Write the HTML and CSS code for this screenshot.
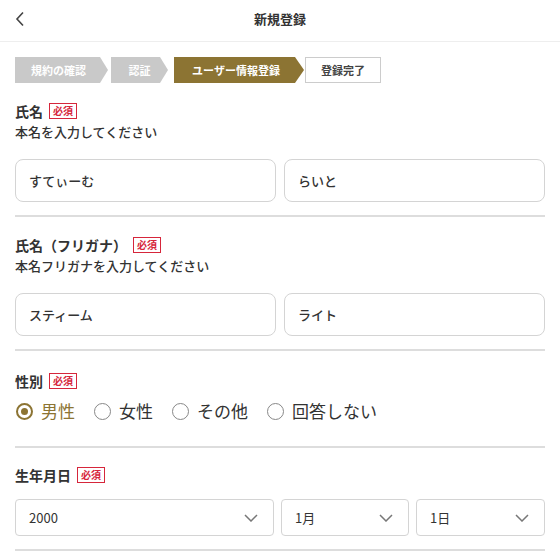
FILE: index.html
```html
<!DOCTYPE html>
<html lang="ja">
<head>
<meta charset="utf-8">
<link rel="stylesheet" href="styles.css">
</head>
<body>
<header class="header">
  <span class="back"><svg width="12" height="16" viewBox="0 0 12 16"><path d="M9 1.5 L3 8 L9 14.5" fill="none" stroke="#444" stroke-width="1.6"/></svg></span>
  <h1 class="title">新規登録</h1>
</header>
<main class="content">
  <div class="steps">
    <div class="step step-first done">規約の確認</div>
    <div class="step done step-mid">認証</div>
    <div class="step current">ユーザー情報登録</div>
    <div class="step todo">登録完了</div>
  </div>

  <section class="section first">
    <div class="label">氏名<span class="req">必須</span></div>
    <div class="sub">本名を入力してください</div>
    <div class="row">
      <div class="input">すてぃーむ</div>
      <div class="input">らいと</div>
    </div>
  </section>

  <section class="section kana">
    <div class="label">氏名（フリガナ）<span class="req">必須</span></div>
    <div class="sub">本名フリガナを入力してください</div>
    <div class="row">
      <div class="input">スティーム</div>
      <div class="input">ライト</div>
    </div>
  </section>

  <section class="section gender">
    <div class="label">性別<span class="req">必須</span></div>
    <div class="radios">
      <span class="radio on"><span class="dot"></span>男性</span>
      <span class="radio"><span class="dot"></span>女性</span>
      <span class="radio"><span class="dot"></span>その他</span>
      <span class="radio"><span class="dot"></span>回答しない</span>
    </div>
  </section>

  <section class="section birth">
    <div class="label">生年月日<span class="req">必須</span></div>
    <div class="selects">
      <div class="select year">2000<svg class="chev" width="14" height="8" viewBox="0 0 14 8"><path d="M1 1 L7 7 L13 1" fill="none" stroke="#777" stroke-width="1.5"/></svg></div>
      <div class="select month">1月<svg class="chev" width="14" height="8" viewBox="0 0 14 8"><path d="M1 1 L7 7 L13 1" fill="none" stroke="#777" stroke-width="1.5"/></svg></div>
      <div class="select day">1日<svg class="chev" width="14" height="8" viewBox="0 0 14 8"><path d="M1 1 L7 7 L13 1" fill="none" stroke="#777" stroke-width="1.5"/></svg></div>
    </div>
  </section>
</main>
</body>
</html>
```
FILE: styles.css
```css
html, body {
  margin: 0;
  padding: 0;
  background: #fff;
  font-family: "Noto Sans CJK JP", "Noto Sans", sans-serif;
  color: #333;
}
.header {
  height: 41px;
  border-bottom: 1px solid #eee;
  display: flex;
  align-items: center;
  justify-content: center;
  position: relative;
}
.back {
  position: absolute;
  left: 14px;
  top: 11px;
  display: flex;
}
.title {
  margin: 0;
  font-size: 13px;
  font-weight: bold;
  color: #333;
  line-height: 20px;
  margin-top: -4px;
}
.content {
  padding: 0 15px;
}
.steps {
  display: flex;
  margin-top: 15px;
  height: 26px;
}
.step {
  height: 26px;
  display: flex;
  align-items: center;
  justify-content: center;
  font-size: 11px;
  font-weight: bold;
  color: #fff;
  white-space: nowrap;
}
.done {
  background: #c9c9c9;
}
.step-first {
  width: 93px;
  padding-right: 6px;
  box-sizing: border-box;
  clip-path: polygon(0 0, calc(100% - 8px) 0, 100% 50%, calc(100% - 8px) 100%, 0 100%);
}
.step-mid {
  width: 57px;
  margin-left: 3px;
  clip-path: polygon(0 0, calc(100% - 8px) 0, 100% 50%, calc(100% - 8px) 100%, 0 100%);
}
.current {
  background: #8c7433;
  width: 130px;
  margin-left: 6px;
  padding-right: 6px;
  box-sizing: border-box;
  clip-path: polygon(0 0, calc(100% - 9px) 0, 100% 50%, calc(100% - 9px) 100%, 0 100%);
}
.todo {
  width: 76px;
  margin-left: 1px;
  box-sizing: border-box;
  border: 1px solid #ccc;
  background: #fff;
  color: #444;
}
.section {
  padding: 18px 0 13px;
  border-bottom: 2px solid #ddd;
}
.label {
  display: flex;
  align-items: center;
  font-size: 14px;
  font-weight: bold;
  line-height: 20px;
  color: #333;
}
.req {
  display: inline-block;
  margin-left: 6px;
  border: 1px solid #d6263b;
  color: #d6263b;
  font-size: 10px;
  font-weight: bold;
  line-height: 14px;
  padding: 0 3px;
}
.sub {
  font-size: 13px;
  font-weight: 500;
  line-height: 20px;
  margin-top: 1px;
  color: #333;
}
.row {
  display: flex;
  gap: 8px;
  margin-top: 17px;
}
.input {
  flex: 1;
  height: 43px;
  box-sizing: border-box;
  border: 1px solid #d4d4d4;
  border-radius: 8px;
  padding-left: 13px;
  display: flex;
  align-items: center;
  font-size: 13px;
  font-weight: 500;
  color: #333;
}
.gender {
  padding-top: 20px;
}
.radios {
  display: flex;
  align-items: center;
  margin-top: 10px;
  margin-bottom: 12px;
  font-size: 17px;
  line-height: 20px;
}
.radio {
  display: inline-flex;
  align-items: center;
  margin-right: 18px;
  color: #333;
}
.dot {
  width: 17px;
  height: 17px;
  box-sizing: border-box;
  border: 1.5px solid #888;
  border-radius: 50%;
  margin-right: 8px;
  margin-left: 1px;
  display: inline-flex;
  align-items: center;
  justify-content: center;
}
.radio.on {
  color: #8c7433;
}
.radio.on .dot {
  border: 2px solid #8c7433;
}
.radio.on .dot::after {
  content: "";
  width: 7px;
  height: 7px;
  border-radius: 50%;
  background: #8c7433;
}
.birth {
  padding-top: 17px;
  padding-bottom: 13px;
}
.selects {
  display: flex;
  gap: 7px;
  margin-top: 14px;
}
.select {
  height: 37px;
  box-sizing: border-box;
  border: 1px solid #d4d4d4;
  border-radius: 4px;
  display: flex;
  align-items: center;
  justify-content: space-between;
  padding: 0 15px 0 13px;
  font-size: 13px;
  color: #333;
}
.year { width: 259px; }
.month { width: 128px; }
.day { flex: 1; }
```
